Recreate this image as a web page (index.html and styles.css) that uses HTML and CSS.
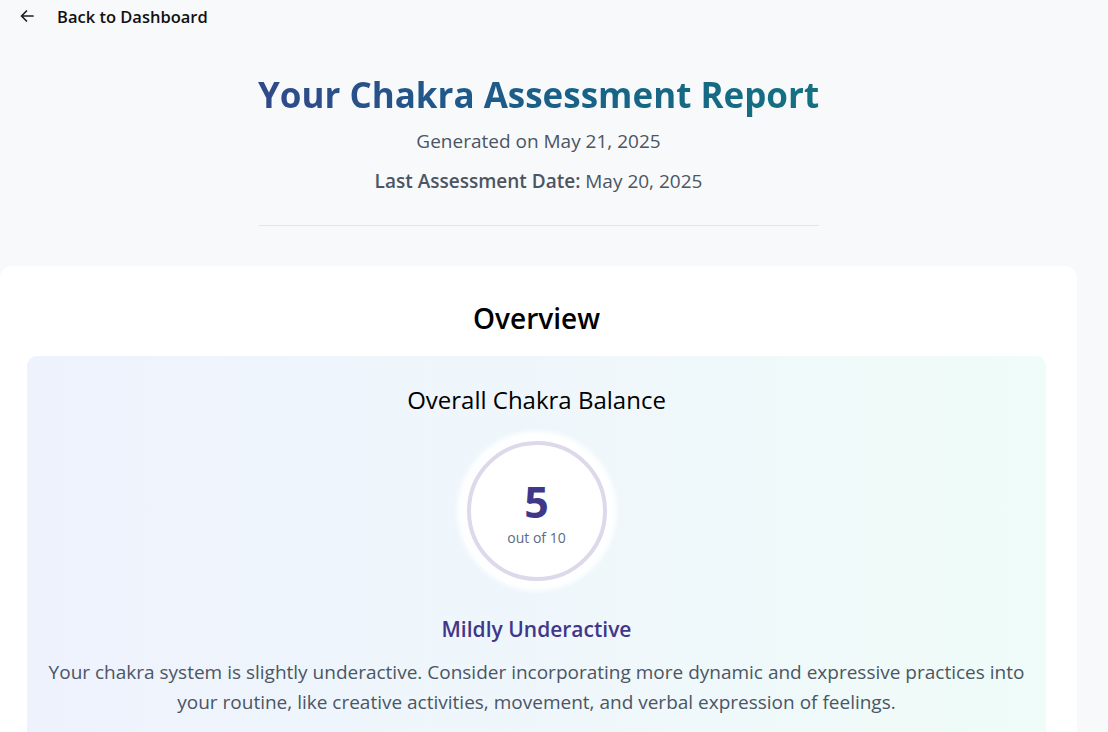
FILE: index.html
```html
<!DOCTYPE html>
<html lang="en">
<head>
<meta charset="utf-8">
<title>Chakra Assessment Report</title>
<link rel="stylesheet" href="styles.css">
</head>
<body>
<div class="topbar">
  <a class="back" href="#">
    <svg class="back-icon" width="16" height="16" viewBox="0 0 16 16" fill="none" stroke="#1f1f1f" stroke-width="1.7" stroke-linecap="round" stroke-linejoin="round"><path d="M14 8H2.5M7.5 3L2.5 8l5 5"/></svg>
    <span>Back to Dashboard</span>
  </a>
</div>
<main class="page">
  <header class="report-header">
    <h1 class="title">Your Chakra Assessment Report</h1>
    <p class="generated">Generated on May 21, 2025</p>
    <p class="last"><strong>Last Assessment Date:</strong> May 20, 2025</p>
    <hr class="divider">
  </header>
  <section class="card">
    <h2 class="card-title">Overview</h2>
    <div class="balance">
      <h3 class="balance-title">Overall Chakra Balance</h3>
      <div class="ring-wrap">
        <div class="ring">
          <div class="score">5</div>
          <div class="out-of">out of 10</div>
        </div>
      </div>
      <div class="status">Mildly Underactive</div>
      <p class="desc">Your chakra system is slightly underactive. Consider incorporating more dynamic and expressive practices into your routine, like creative activities, movement, and verbal expression of feelings.</p>
    </div>
  </section>
</main>
</body>
</html>
```

FILE: styles.css
```css
* { box-sizing: border-box; }
html, body { margin: 0; padding: 0; }
body {
  background: #f8f9fb;
  font-family: "Open Sans", "Noto Sans", sans-serif;
  color: #111;
  width: 1108px;
  height: 732px;
  overflow: hidden;
}
.topbar {
  height: 32px;
  display: flex;
  align-items: center;
  padding-left: 19px;
}
.back {
  display: flex;
  align-items: center;
  gap: 22px;
  text-decoration: none;
  color: #111;
  font-size: 16.5px;
  font-weight: 600;
}
.back-icon { display: block; }
.page {
  width: 1077px;
}
.report-header {
  display: flex;
  flex-direction: column;
  align-items: center;
  padding-top: 41px;
}
.title {
  margin: 0;
  font-size: 35px;
  line-height: 44px;
  font-weight: 700;
  background: linear-gradient(90deg, #30498a 0%, #1a5f88 50%, #137181 100%);
  -webkit-background-clip: text;
  background-clip: text;
  color: transparent;
}
.generated {
  margin: 10px 0 0;
  font-size: 19px;
  line-height: 28px;
  color: #4b5563;
}
.last {
  margin: 12px 0 0;
  font-size: 19px;
  line-height: 28px;
  color: #4b5563;
}
.last strong { font-weight: 600; }
.divider {
  width: 560px;
  margin: 30px 0 0;
  border: 0;
  border-top: 1px solid #e3e5ea;
}
.card {
  margin-top: 40px;
  background: #fff;
  border-radius: 12px;
  padding: 34px 31px 0 27px;
  height: 500px;
}
.card-title {
  margin: 0;
  text-align: center;
  font-size: 28px;
  line-height: 36px;
  font-weight: 600;
  color: #000;
}
.balance {
  margin-top: 20px;
  border-radius: 10px;
  background: linear-gradient(90deg, #eef2fd 0%, #eff7fb 55%, #effcf8 100%);
  padding: 28px 12px 24px;
  display: flex;
  flex-direction: column;
  align-items: center;
}
.balance-title {
  margin: 0;
  font-size: 24px;
  line-height: 32px;
  font-weight: 500;
  color: #000;
}
.ring-wrap {
  margin-top: 25px;
}
.ring {
  width: 140px;
  height: 140px;
  border-radius: 50%;
  border: 4px solid #dcd9eb;
  background: #fff;
  box-shadow: 0 0 4px 10px rgba(255,255,255,0.9);
  display: flex;
  flex-direction: column;
  align-items: center;
  justify-content: center;
  gap: 6px;
  padding-top: 6px;
}
.score {
  font-size: 43px;
  line-height: 42px;
  font-weight: 700;
  color: #3f3788;
}
.out-of {
  font-size: 14px;
  line-height: 18px;
  color: #5b6b82;
}
.status {
  margin-top: 33px;
  font-size: 21px;
  line-height: 30px;
  font-weight: 600;
  color: #41378a;
}
.desc {
  margin: 13px 0 0;
  text-align: center;
  font-size: 19px;
  line-height: 30px;
  color: #4b5563;
  max-width: 985px;
}
```
